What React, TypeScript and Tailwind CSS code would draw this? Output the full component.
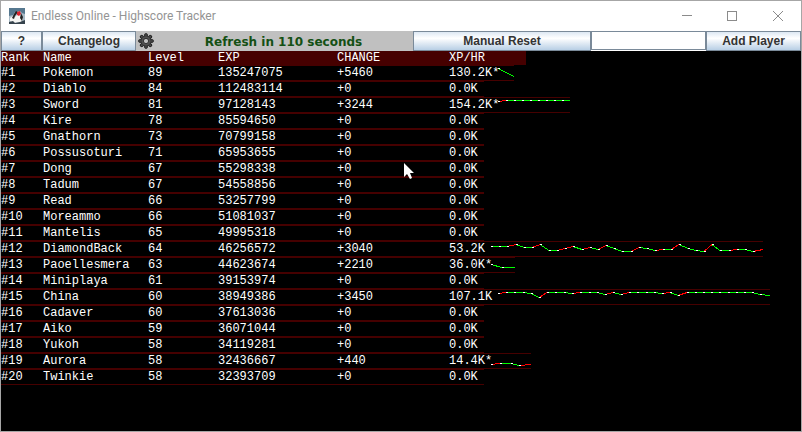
import React from "react";

type Point = [number, number];

type Player = {
  name: string;
  level: number;
  exp: number;
  change: number;
  rate: string;
  trend?: Point[];
  colors?: string;
};

const players: Player[] = [
  { name: "Pokemon", level: 89, exp: 135247075, change: 5460, rate: "130.2K*", trend: [[0, 3], [16, 11]], colors: "g" },
  { name: "Diablo", level: 84, exp: 112483114, change: 0, rate: "0.0K" },
  {
    name: "Sword", level: 81, exp: 97128143, change: 3244, rate: "154.2K*",
    trend: [[0, 4], [8, 3], [16, 3], [24, 3], [32, 3], [40, 3], [48, 3], [56, 3], [64, 3], [72, 3]],
    colors: "rgggggggg",
  },
  { name: "Kire", level: 78, exp: 85594650, change: 0, rate: "0.0K" },
  { name: "Gnathorn", level: 73, exp: 70799158, change: 0, rate: "0.0K" },
  { name: "Possusoturi", level: 71, exp: 65953655, change: 0, rate: "0.0K" },
  { name: "Dong", level: 67, exp: 55298338, change: 0, rate: "0.0K" },
  { name: "Tadum", level: 67, exp: 54558856, change: 0, rate: "0.0K" },
  { name: "Read", level: 66, exp: 53257799, change: 0, rate: "0.0K" },
  { name: "Moreammo", level: 66, exp: 51081037, change: 0, rate: "0.0K" },
  { name: "Mantelis", level: 65, exp: 49995318, change: 0, rate: "0.0K" },
  {
    name: "DiamondBack", level: 64, exp: 46256572, change: 3040, rate: "53.2K",
    trend: [[0, 5], [8, 5], [16, 5], [25, 3], [33, 6], [41, 6], [49, 3], [58, 9], [66, 9], [74, 7], [82, 5], [91, 8], [99, 6], [107, 8], [115, 4], [123, 7], [131, 10], [140, 10], [148, 6], [156, 7], [164, 9], [172, 8], [180, 8], [188, 3], [197, 7], [205, 9], [213, 10], [221, 3], [229, 9], [238, 9], [246, 8], [254, 8], [262, 10], [272, 8]],
    colors: "ggrggrggrrgrgrgggrggrgrgggrggrggr",
  },
  { name: "Paoellesmera", level: 63, exp: 44623674, change: 2210, rate: "36.0K*", trend: [[0, 7], [11, 10], [24, 10]], colors: "gg" },
  { name: "Miniplaya", level: 61, exp: 39153974, change: 0, rate: "0.0K" },
  {
    name: "China", level: 60, exp: 38949386, change: 3450, rate: "107.1K",
    trend: [[0, 4], [8, 3], [16, 3], [25, 3], [33, 4], [41, 8], [49, 3], [57, 3], [66, 3], [74, 4], [82, 3], [91, 3], [99, 3], [107, 5], [115, 3], [123, 5], [131, 3], [139, 3], [148, 3], [156, 3], [164, 4], [172, 3], [180, 6], [189, 3], [197, 3], [205, 3], [213, 3], [221, 3], [230, 3], [238, 3], [246, 3], [254, 3], [262, 5], [272, 6]],
    colors: "rggggrgggrgggrgrggggrgrgggggggggg",
  },
  { name: "Cadaver", level: 60, exp: 37613036, change: 0, rate: "0.0K" },
  { name: "Aiko", level: 59, exp: 36071044, change: 0, rate: "0.0K" },
  { name: "Yukoh", level: 58, exp: 34119281, change: 0, rate: "0.0K" },
  { name: "Aurora", level: 58, exp: 32436667, change: 440, rate: "14.4K*", trend: [[0, 11], [9, 10], [20, 10], [28, 12], [40, 11]], colors: "rggr" },
  { name: "Twinkie", level: 58, exp: 32393709, change: 0, rate: "0.0K" },
];

function Trend({ points, colors }: { points: Point[]; colors: string }) {
  const width = points[points.length - 1][0];
  return (
    <svg width={width} height="14" viewBox={`0 1 ${width} 14`} className="block" shapeRendering="crispEdges" aria-hidden="true">
      {points.slice(1).map(([x, y], i) => (
        <line key={i} x1={points[i][0]} y1={points[i][1] + 0.5} x2={x} y2={y + 0.5} stroke={colors[i] === "r" ? "#ff0000" : "#00ff00"} />
      ))}
      {points.slice(0, -1).map(([x, y], i) => (
        <rect key={i} x={x} y={y} width="2" height="1" fill="#fff" />
      ))}
    </svg>
  );
}

function rateWidth(rate: string) {
  if (rate === "0.0K") return "w-[35px]";
  return rate.indexOf(".") === 3 ? "w-[49px]" : "w-[42px]";
}

const columns = "grid grid-cols-[42px_105px_70px_119px_112px_auto] w-max text-left";
const button =
  "h-5 border border-[#7a8a99] bg-linear-to-b from-[#dde8f3] via-white via-35% to-[#b8cfe5] text-xs leading-none font-bold text-[#333333]";

export default function App() {
  return (
    <div className="flex min-h-screen flex-col border border-[#a6a6a6] bg-black font-['Liberation_Sans',Arial,sans-serif]">
      <header className="flex h-[30px] items-center bg-white">
        <svg width="16" height="16" viewBox="0 0 16 16" className="ml-2" aria-hidden="true">
          <rect width="16" height="16" fill="#a9bac6" />
          <path d="M0 0h16v6l-3-1-2-2-5 1-2 3-4 1z" fill="#56788f" />
          <path d="M1 10l3-2 2 1 2-2 4-1 2 5-2 3-8 1-3-2z" fill="#f4f4f2" />
          <path d="M7 3l2 1-3 4-1 3-2-1 2-4zM12 5l2 4-1 4-2-3z" fill="#222" />
          <path d="M8 4l3-1 1 3-2 2-2-1z" fill="#d9232e" />
          <path d="M0 14l4-1 2 2 5-1 5-2v4H0z" fill="#36434c" />
        </svg>
        <h1 className="ml-[6px] font-[Roboto,sans-serif] text-xs text-[#949494]">Endless Online - Highscore Tracker</h1>
        <div className="ml-auto flex items-center text-[#8b8b8b]">
          <button aria-label="Minimize" className="grid h-[30px] w-[45px] place-items-center">
            <svg width="10" height="10" shapeRendering="crispEdges"><path d="M0 4.5h10" stroke="currentColor" /></svg>
          </button>
          <button aria-label="Maximize" className="grid h-[30px] w-[46px] place-items-center">
            <svg width="10" height="10" fill="none" shapeRendering="crispEdges"><path d="M.5.5h9v9h-9z" stroke="currentColor" /></svg>
          </button>
          <button aria-label="Close" className="grid h-[30px] w-[46px] place-items-center">
            <svg width="10" height="10"><path d="M0 0l10 10M10 0L0 10" stroke="currentColor" /></svg>
          </button>
        </div>
      </header>

      <div className="flex h-5 bg-[#c0c0c0]">
        <button className={`${button} w-[41px]`}>?</button>
        <button className={`${button} w-[94px]`}>Changelog</button>
        <button aria-label="Settings" className="ml-[2px] grid w-4 place-items-center">
          <svg width="16" height="16" viewBox="-8 -8 16 16" aria-hidden="true">
            <g fill="#505050" stroke="#1c1c1c" strokeWidth="1">
              {[0, 45, 90, 135].map((a) => (
                <rect key={a} x="-1.3" y="-7.3" width="2.6" height="14.6" rx=".8" transform={`rotate(${a})`} />
              ))}
            </g>
            <circle r="5" fill="#505050" stroke="#2a2a2a" strokeWidth=".6" />
            <circle r="2.6" fill="#c0c0c0" stroke="#1c1c1c" strokeWidth=".8" />
          </svg>
        </button>
        <p className="flex-1 pt-px text-center font-['Comic_Sans_MS','DejaVu_Sans',sans-serif] text-xs leading-5 font-bold text-[#145014]">
          Refresh in 110 seconds
        </p>
        <button className={`${button} w-[178px]`}>Manual Reset</button>
        <label className="flex w-[115px] items-start bg-white">
          <input aria-label="Player name" className="h-[19px] w-full border border-[#7a8a99] bg-white px-1 text-xs outline-none" />
        </label>
        <button className={`${button} w-[95px]`}>Add Player</button>
      </div>

      <main className="relative flex-1 bg-black text-white">
        <table className="block font-['Liberation_Mono','Courier_New',monospace] text-xs leading-[14px]">
          <thead className="block">
            <tr className={`${columns} h-[14px] min-w-[525px] bg-[#460000]`}>
              {["Rank", "Name", "Level", "EXP", "CHANGE", "XP/HR"].map((h) => (
                <th key={h} scope="col" className="font-normal">{h}</th>
              ))}
            </tr>
          </thead>
          <tbody className="block">
            {players.map((p, i) => (
              <tr key={p.name} className={`${columns} h-4 border-y border-[#460000]`}>
                <td>#{i + 1}</td>
                <td>{p.name}</td>
                <td>{p.level}</td>
                <td>{p.exp}</td>
                <td>+{p.change}</td>
                <td className="flex">
                  <span className={rateWidth(p.rate)}>{p.rate}</span>
                  {p.trend && <Trend points={p.trend} colors={p.colors ?? ""} />}
                </td>
              </tr>
            ))}
          </tbody>
        </table>
        <svg width="12" height="18" className="absolute top-[112px] left-[403px]" aria-hidden="true">
          <path d="M0 0v14l3-3 3 5 2-1-2-5h4z" fill="#fff" />
        </svg>
      </main>
    </div>
  );
}
